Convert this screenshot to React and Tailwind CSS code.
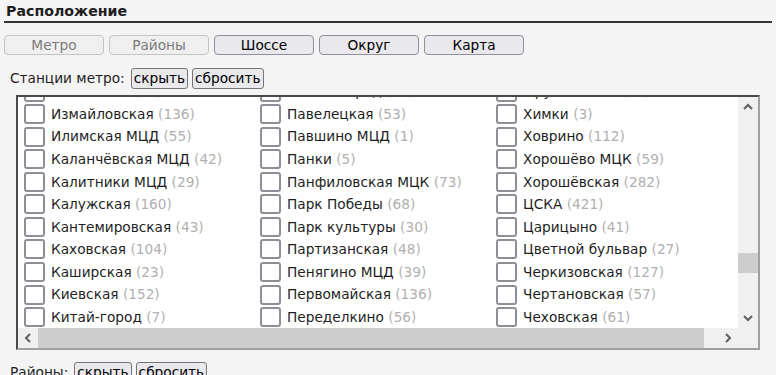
import React from 'react';

const columns = [
  [
    ['Измайлово', '48'],
    ['Измайловская', '136'],
    ['Илимская МЦД', '55'],
    ['Каланчёвская МЦД', '42'],
    ['Калитники МЦД', '29'],
    ['Калужская', '160'],
    ['Кантемировская', '43'],
    ['Каховская', '104'],
    ['Каширская', '23'],
    ['Киевская', '152'],
    ['Китай-город', '7'],
  ],
  [
    ['Охотный ряд', '12'],
    ['Павелецкая', '53'],
    ['Павшино МЦД', '1'],
    ['Панки', '5'],
    ['Панфиловская МЦК', '73'],
    ['Парк Победы', '68'],
    ['Парк культуры', '30'],
    ['Партизанская', '48'],
    ['Пенягино МЦД', '39'],
    ['Первомайская', '136'],
    ['Переделкино', '56'],
  ],
  [
    ['Фрунзенская', '64'],
    ['Химки', '3'],
    ['Ховрино', '112'],
    ['Хорошёво МЦК', '59'],
    ['Хорошёвская', '282'],
    ['ЦСКА', '421'],
    ['Царицыно', '41'],
    ['Цветной бульвар', '27'],
    ['Черкизовская', '127'],
    ['Чертановская', '57'],
    ['Чеховская', '61'],
  ],
];

const tabs = [
  { label: 'Метро', disabled: true },
  { label: 'Районы', disabled: true },
  { label: 'Шоссе' },
  { label: 'Округ' },
  { label: 'Карта' },
];

const Chevron = ({ dir }) => {
  const pts = {
    up: '1,6 5,2 9,6',
    down: '1,2 5,6 9,2',
    left: '6,1 2,5 6,9',
    right: '2,1 6,5 2,9',
  }[dir];
  const vertical = dir === 'up' || dir === 'down';
  return (
    <svg width={vertical ? 10 : 8} height={vertical ? 8 : 10} viewBox={vertical ? '0 0 10 8' : '0 0 8 10'}>
      <polyline points={pts} fill="none" stroke="#606060" strokeWidth="2" />
    </svg>
  );
};

const SmallButton = ({ children }) => (
  <button className="h-[21px] px-[2px] leading-[17px] bg-[#e9e9ed] border border-[#767676] rounded-[3px] text-[13.7px] text-black">
    {children}
  </button>
);

const App = () => {
  return (
    <div className="min-h-screen bg-[#f4f4f4] px-1 pt-[2px] text-[13.7px] text-[#1e1e1e] font-['DejaVu_Sans',sans-serif]">
      <h2 className="font-bold text-[14.2px] leading-[18px] px-[2px] pb-[1px] border-b-2 border-[#333]">Расположение</h2>

      {/* Tabs */}
      <div className="flex gap-[5px] mt-[12px]">
        {tabs.map((t) => (
          <button
            key={t.label}
            className={`w-[100px] h-[20px] rounded-[4px] border text-[13.7px] leading-[18px] ${
              t.disabled
                ? 'bg-[#efefef] border-[#c4c4c4] text-[#7a7a7a]'
                : 'bg-[#e9e9ed] border-[#8f8f9d] text-black'
            }`}
          >
            {t.label}
          </button>
        ))}
      </div>

      {/* Metro stations */}
      <div className="flex items-center pl-[6px] mt-[13px] h-[21px]">
        <span>Станции метро:</span>
        <div className="flex gap-[4px] ml-[6px]">
          <SmallButton>скрыть</SmallButton>
          <SmallButton>сбросить</SmallButton>
        </div>
      </div>

      <div className="ml-[12px] mt-[6px] w-[744px] h-[255px] border-2 border-t-[#4a4a4a] border-l-[#4a4a4a] border-r-[#a0a0a0] border-b-[#a0a0a0] flex flex-col bg-white">
        <div className="flex h-[231px]">
          <div className="flex-1 overflow-hidden">
            <div className="flex pl-[6px] -mt-[16.7px]">
              {columns.map((col, ci) => (
                <div key={ci} className="w-[236px] flex-none">
                  {col.map(([name, count]) => (
                    <div key={name} className="flex items-center h-[22.56px] whitespace-nowrap">
                      <span className="w-[21px] h-[20px] flex-none border-2 border-[#8e8e96] rounded-[3px] bg-white" />
                      <span className="ml-[6px]">
                        {name} <span className="text-[#b0b0b0]">({count})</span>
                      </span>
                    </div>
                  ))}
                </div>
              ))}
            </div>
          </div>
          {/* vertical scrollbar */}
          <div className="w-[20px] flex-none bg-[#f0f0f0] flex flex-col">
            <div className="h-[20px] flex items-center justify-center">
              <Chevron dir="up" />
            </div>
            <div className="flex-1">
              <div className="mt-[136px] h-[20px] bg-[#cdcdcd]" />
            </div>
            <div className="h-[20px] flex items-center justify-center">
              <Chevron dir="down" />
            </div>
          </div>
        </div>
        {/* horizontal scrollbar */}
        <div className="flex h-[20px] bg-[#f0f0f0]">
          <div className="w-[20px] flex items-center justify-center">
            <Chevron dir="left" />
          </div>
          <div className="w-[666px] bg-[#cdcdcd]" />
          <div className="flex-1" />
          <div className="w-[20px] flex items-center justify-center">
            <Chevron dir="right" />
          </div>
          <div className="w-[20px]" />
        </div>
      </div>

      {/* Districts */}
      <div className="flex items-center pl-[6px] mt-[12px] h-[21px]">
        <span>Районы:</span>
        <div className="flex gap-[4px] ml-[6px]">
          <SmallButton>скрыть</SmallButton>
          <SmallButton>сбросить</SmallButton>
        </div>
      </div>
    </div>
  );
};

export default App;
